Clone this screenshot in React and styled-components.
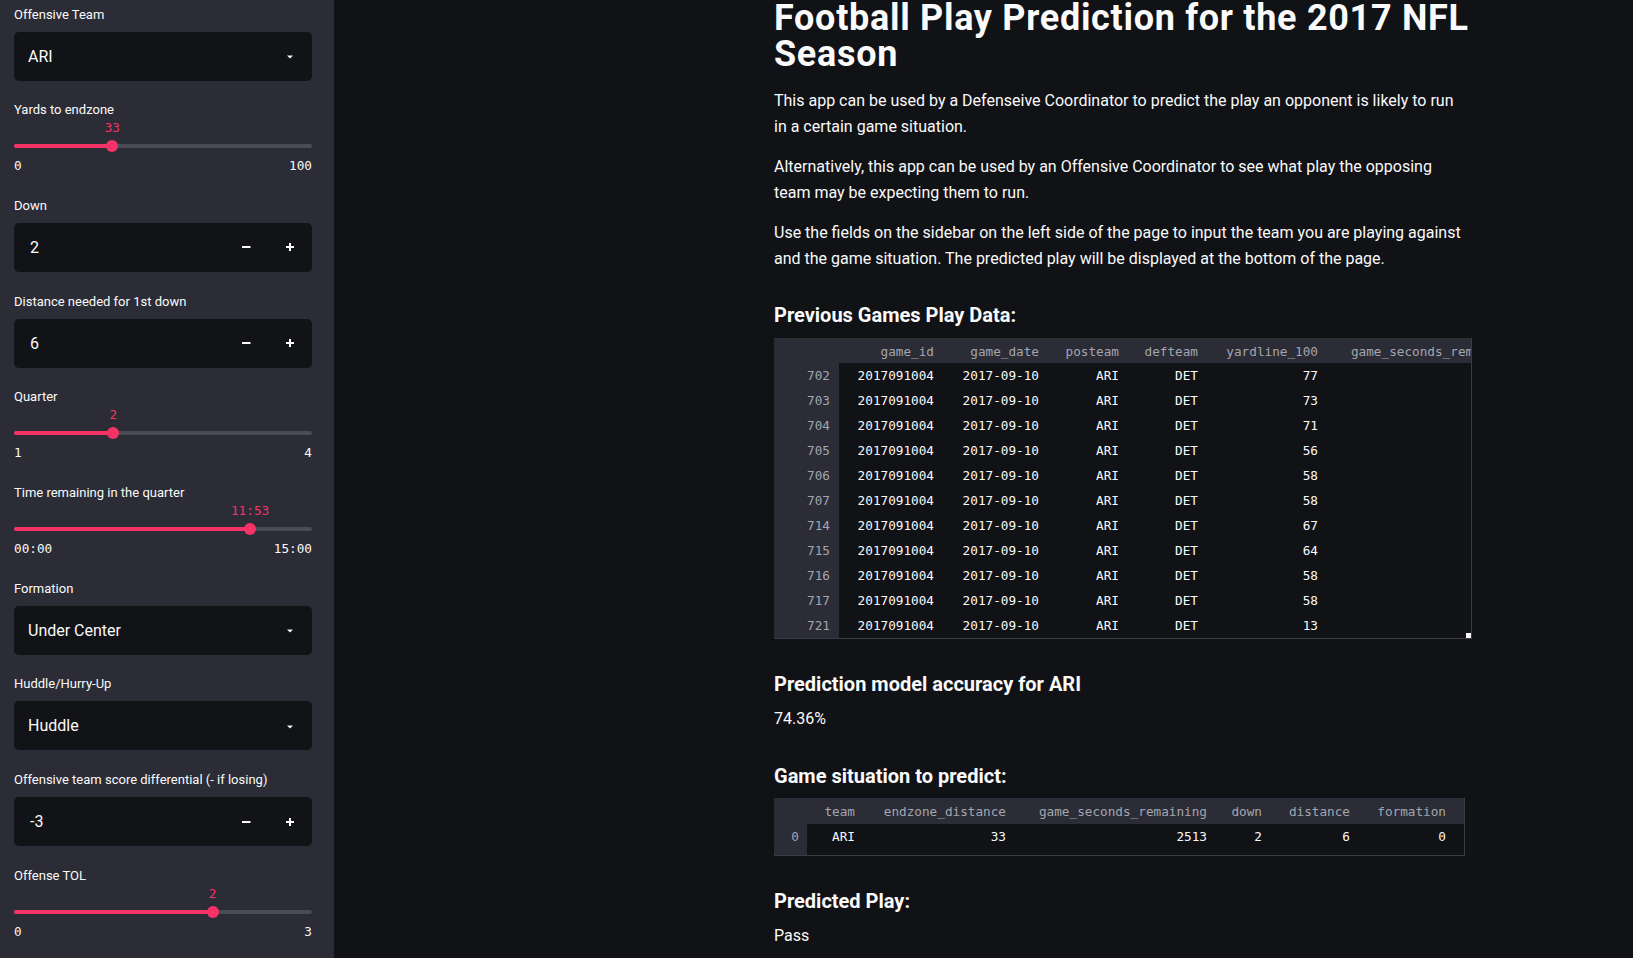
import React from 'react';
import styled, { createGlobalStyle } from 'styled-components';

const sans = `Roboto, "Liberation Sans", Arial, sans-serif`;
const mono = `"DejaVu Sans Mono", "Liberation Mono", monospace`;
const PINK = '#f63366';
const PANEL = '#2b2c36';
const DARK = '#111216';

const GlobalStyle = createGlobalStyle`
  * { box-sizing: border-box; }
  html, body { margin: 0; padding: 0; background: ${DARK}; }
  body { font-family: ${sans}; color: #fafafa; -webkit-font-smoothing: antialiased; }
`;

const Page = styled.div`
  display: grid;
  grid-template-columns: 334px 1fr;
  height: 958px;
  overflow: hidden;
`;

const Sidebar = styled.aside`
  background: ${PANEL};
  padding: 4.5px 22px 0 14px;
  display: flex;
  flex-direction: column;
  gap: 19.7px;
`;

const Widget = styled.div`
  display: flex;
  flex-direction: column;
`;

const Label = styled.label`
  font-size: 13px;
  line-height: 20px;
  height: 20px;
  white-space: nowrap;
  margin-bottom: ${(p) => p.$gap || 0}px;
`;

const InputBox = styled.div`
  height: 49px;
  background: #121317;
  border-radius: 5px;
  display: flex;
  align-items: center;
  padding-left: ${(p) => p.$pad}px;
  font-size: 16px;
`;

const InputText = styled.span`
  flex: 1;
`;

const IconCell = styled.span`
  width: 44px;
  height: 100%;
  display: flex;
  align-items: center;
  justify-content: center;
`;

const ValueRow = styled.div`
  position: relative;
  height: 16px;
`;

const ThumbValue = styled.span`
  position: absolute;
  top: 0;
  transform: translateX(-50%);
  font-family: ${mono};
  font-size: 12.7px;
  line-height: 16px;
  color: ${PINK};
  white-space: nowrap;
`;

const TrackRow = styled.div`
  position: relative;
  height: 20px;
  display: flex;
  align-items: center;
`;

const Track = styled.div`
  width: 100%;
  height: 4px;
  border-radius: 2px;
  background: #4a4b55;
  overflow: hidden;
`;

const TrackFill = styled.div`
  height: 100%;
  background: ${PINK};
`;

const Thumb = styled.span`
  position: absolute;
  top: 50%;
  width: 12px;
  height: 12px;
  margin: -6px 0 0 -6px;
  border-radius: 50%;
  background: ${PINK};
`;

const Range = styled.div`
  display: flex;
  justify-content: space-between;
  font-family: ${mono};
  font-size: 12.7px;
  line-height: 20px;
`;

const Main = styled.main`
  padding-left: 440px;
  overflow: hidden;
`;

const Content = styled.div`
  width: 704px;
  display: flex;
  flex-direction: column;
`;

const Title = styled.h1`
  margin: 0;
  font-size: 36px;
  line-height: 36px;
  font-weight: 700;
  letter-spacing: 0.7px;
`;

const Para = styled.p`
  margin: ${(p) => p.$top}px 0 0;
  font-size: 16px;
  line-height: 26px;
  white-space: nowrap;
`;

const Subheader = styled.h3`
  margin: ${(p) => p.$top}px 0 0;
  font-size: 20px;
  line-height: 28px;
  font-weight: 700;
`;

const TableFrame = styled.div`
  position: relative;
  margin-top: ${(p) => p.$top}px;
  width: ${(p) => p.$width}px;
  overflow: hidden;
  background: ${DARK};
  border-right: 1px solid #3a3b45;
  border-bottom: 1px solid #3a3b45;
`;

const Grid = styled.table`
  border-collapse: collapse;
  table-layout: fixed;
  font-family: ${mono};
  font-size: 12.7px;
`;

const HeadCell = styled.th`
  height: ${(p) => p.$h}px;
  padding: 1px ${(p) => p.$pad}px 0 0;
  text-align: right;
  font-weight: 400;
  color: #a3a6ae;
  background: ${PANEL};
  white-space: nowrap;
  overflow: hidden;
`;

const BodyCell = styled.td`
  height: ${(p) => 25 + p.$extra}px;
  line-height: 25px;
  vertical-align: top;
  padding: 0 ${(p) => p.$pad}px ${(p) => p.$extra}px 0;
  text-align: right;
  white-space: nowrap;
  overflow: hidden;
  color: ${(p) => (p.$index ? '#a3a6ae' : '#fafafa')};
  background: ${(p) => (p.$index ? PANEL : DARK)};
`;

const Corner = styled.span`
  position: absolute;
  right: 0;
  bottom: 0;
  width: 5px;
  height: 5px;
  background: #fafafa;
`;

const Caret = () => (
  <svg width="10" height="10" viewBox="0 0 10 10">
    <path d="M2 4.5 L8 4.5 L5 7.6 Z" fill="#fafafa" />
  </svg>
);

const Minus = () => (
  <svg width="10" height="10" viewBox="0 0 10 10">
    <rect x="1" y="4" width="8.5" height="2" fill="#fafafa" />
  </svg>
);

const Plus = () => (
  <svg width="10" height="10" viewBox="0 0 10 10">
    <rect x="1" y="4" width="8" height="2" fill="#fafafa" />
    <rect x="4" y="1" width="2" height="8" fill="#fafafa" />
  </svg>
);

const widgets = [
  { kind: 'select', label: 'Offensive Team', value: 'ARI' },
  { kind: 'slider', label: 'Yards to endzone', value: '33', pct: 33, min: '0', max: '100' },
  { kind: 'number', label: 'Down', value: '2' },
  { kind: 'number', label: 'Distance needed for 1st down', value: '6' },
  { kind: 'slider', label: 'Quarter', value: '2', pct: 100 / 3, min: '1', max: '4' },
  {
    kind: 'slider',
    label: 'Time remaining in the quarter',
    value: '11:53',
    pct: (713 / 900) * 100,
    min: '00:00',
    max: '15:00',
  },
  { kind: 'select', label: 'Formation', value: 'Under Center' },
  { kind: 'select', label: 'Huddle/Hurry-Up', value: 'Huddle' },
  { kind: 'number', label: 'Offensive team score differential (- if losing)', value: '-3' },
  { kind: 'slider', label: 'Offense TOL', value: '2', pct: 200 / 3, min: '0', max: '3' },
];

function SidebarWidget({ w }) {
  if (w.kind === 'slider') {
    return (
      <Widget>
        <Label>{w.label}</Label>
        <ValueRow>
          <ThumbValue style={{ left: `${w.pct}%` }}>{w.value}</ThumbValue>
        </ValueRow>
        <TrackRow>
          <Track>
            <TrackFill style={{ width: `${w.pct}%` }} />
          </Track>
          <Thumb style={{ left: `${w.pct}%` }} />
        </TrackRow>
        <Range>
          <span>{w.min}</span>
          <span>{w.max}</span>
        </Range>
      </Widget>
    );
  }
  if (w.kind === 'number') {
    return (
      <Widget>
        <Label $gap={7}>{w.label}</Label>
        <InputBox $pad={16}>
          <InputText>{w.value}</InputText>
          <IconCell>
            <Minus />
          </IconCell>
          <IconCell>
            <Plus />
          </IconCell>
        </InputBox>
      </Widget>
    );
  }
  return (
    <Widget>
      <Label $gap={7}>{w.label}</Label>
      <InputBox $pad={14}>
        <InputText>{w.value}</InputText>
        <IconCell>
          <Caret />
        </IconCell>
      </InputBox>
    </Widget>
  );
}

const historyCols = [
  { name: '', w: 65, pad: 9 },
  { name: 'game_id', w: 109, pad: 14 },
  { name: 'game_date', w: 105, pad: 14 },
  { name: 'posteam', w: 80, pad: 14 },
  { name: 'defteam', w: 79, pad: 14 },
  { name: 'yardline_100', w: 120, pad: 14 },
  { name: 'game_seconds_remaining', w: 201, pad: 14 },
];

const historyRows = [
  [702, 77],
  [703, 73],
  [704, 71],
  [705, 56],
  [706, 58],
  [707, 58],
  [714, 67],
  [715, 64],
  [716, 58],
  [717, 58],
  [721, 13],
].map(([idx, yards]) => [String(idx), '2017091004', '2017-09-10', 'ARI', 'DET', String(yards), '']);

const situationCols = [
  { name: '', w: 33, pad: 8 },
  { name: 'team', w: 62, pad: 14 },
  { name: 'endzone_distance', w: 151, pad: 14 },
  { name: 'game_seconds_remaining', w: 201, pad: 14 },
  { name: 'down', w: 55, pad: 14 },
  { name: 'distance', w: 88, pad: 14 },
  { name: 'formation', w: 100, pad: 18 },
];

const situationRows = [['0', 'ARI', '33', '2513', '2', '6', '0']];

function DataTable({ cols, rows, width, top, headH, extra = 0, corner }) {
  const total = cols.reduce((s, c) => s + c.w, 0);
  return (
    <TableFrame $width={width} $top={top}>
      <Grid style={{ width: total }}>
        <colgroup>
          {cols.map((c, i) => (
            <col key={i} style={{ width: c.w }} />
          ))}
        </colgroup>
        <thead>
          <tr>
            {cols.map((c, i) => (
              <HeadCell key={i} $h={headH} $pad={c.pad}>
                {c.name}
              </HeadCell>
            ))}
          </tr>
        </thead>
        <tbody>
          {rows.map((r, ri) => (
            <tr key={ri}>
              {r.map((v, ci) => (
                <BodyCell key={ci} $index={ci === 0} $pad={cols[ci].pad} $extra={extra}>
                  {v}
                </BodyCell>
              ))}
            </tr>
          ))}
        </tbody>
      </Grid>
      {corner && <Corner />}
    </TableFrame>
  );
}

export default function App() {
  return (
    <>
      <GlobalStyle />
      <Page>
        <Sidebar>
          {widgets.map((w) => (
            <SidebarWidget key={w.label} w={w} />
          ))}
        </Sidebar>
        <Main>
          <Content>
            <Title>Football Play Prediction for the 2017 NFL Season</Title>
            <Para $top={16}>
              This app can be used by a Defenseive Coordinator to predict the play an opponent is likely to run
              <br />
              in a certain game situation.
            </Para>
            <Para $top={14}>
              Alternatively, this app can be used by an Offensive Coordinator to see what play the opposing
              <br />
              team may be expecting them to run.
            </Para>
            <Para $top={14}>
              Use the fields on the sidebar on the left side of the page to input the team you are playing against
              <br />
              and the game situation. The predicted play will be displayed at the bottom of the page.
            </Para>
            <Subheader $top={29}>Previous Games Play Data:</Subheader>
            <DataTable cols={historyCols} rows={historyRows} width={698} top={9} headH={25} corner />
            <Subheader $top={31}>Prediction model accuracy for ARI</Subheader>
            <Para $top={8}>74.36%</Para>
            <Subheader $top={30}>Game situation to predict:</Subheader>
            <DataTable cols={situationCols} rows={situationRows} width={691} top={8} headH={26} extra={6} />
            <Subheader $top={31}>Predicted Play:</Subheader>
            <Para $top={8}>Pass</Para>
          </Content>
        </Main>
      </Page>
    </>
  );
}
